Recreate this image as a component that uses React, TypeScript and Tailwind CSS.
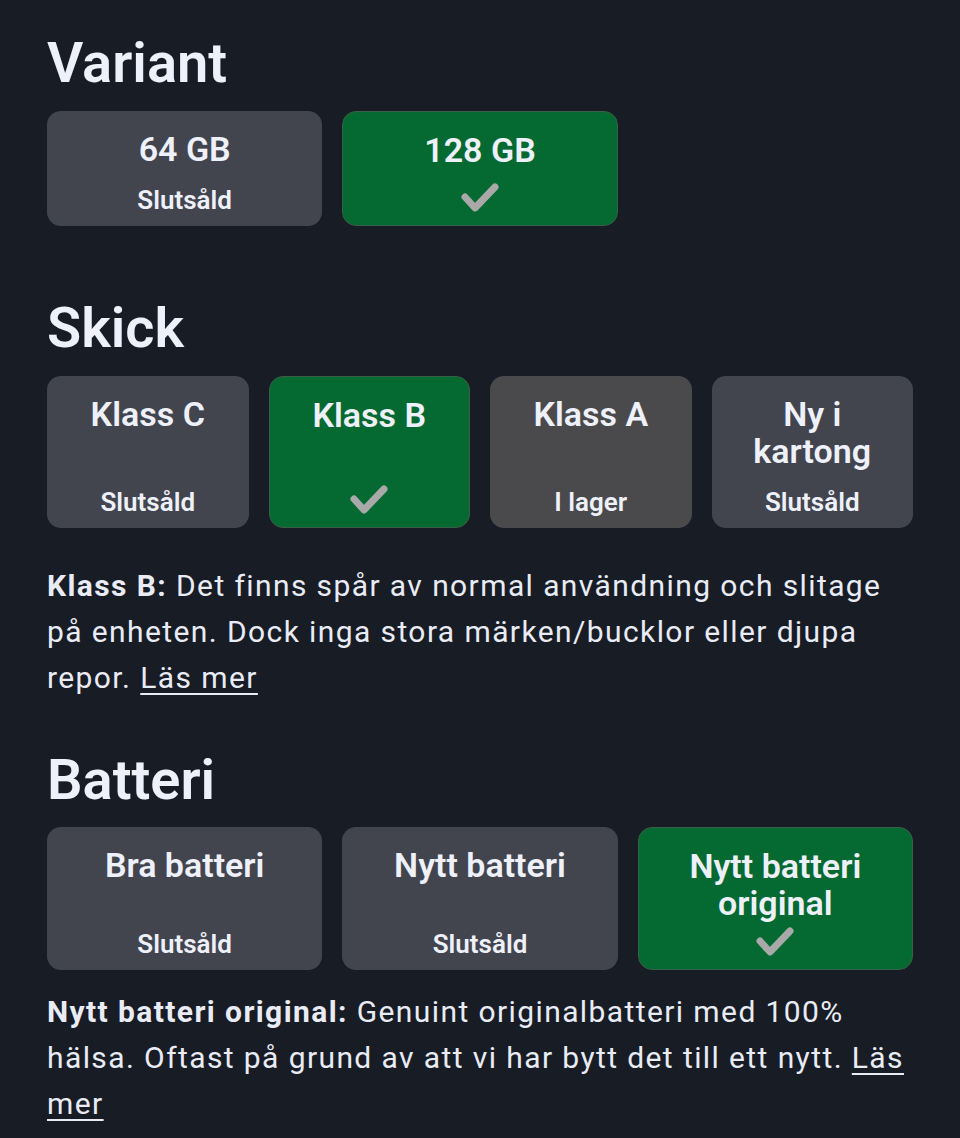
type Option = {
  title: string;
  sub?: string;
  selected?: boolean;
  tone?: "gray" | "stone";
};

const VARIANTS: Option[] = [
  { title: "64 GB", sub: "Slutsåld" },
  { title: "128 GB", selected: true },
];

const CONDITIONS: Option[] = [
  { title: "Klass C", sub: "Slutsåld" },
  { title: "Klass B", selected: true },
  { title: "Klass A", sub: "I lager", tone: "stone" },
  { title: "Ny i kartong", sub: "Slutsåld" },
];

const BATTERIES: Option[] = [
  { title: "Bra batteri", sub: "Slutsåld" },
  { title: "Nytt batteri", sub: "Slutsåld" },
  { title: "Nytt batteri original", selected: true },
];

function Check() {
  return (
    <svg width="40" height="30" viewBox="0 0 40 30" fill="none" className="mb-[2px]">
      <polyline
        points="5,14 15,25 35,4"
        stroke="#a9a9a9"
        strokeWidth="7"
        strokeLinecap="round"
        strokeLinejoin="round"
      />
    </svg>
  );
}

function OptionCard({ opt, height }: { opt: Option; height: string }) {
  const bg = opt.selected
    ? "bg-[#056a31] border border-[#3a5f48]"
    : opt.tone === "stone"
      ? "bg-[#4a4a4c]"
      : "bg-[#42454e]";
  return (
    <div
      className={`${bg} ${height} rounded-[14px] flex flex-col items-center justify-between px-3 pt-5 pb-[11px] text-center`}
    >
      <div className="text-[34px] leading-[37px] font-semibold text-[#eef1fb]">
        {opt.title}
      </div>
      <div className="h-[30px] flex items-center justify-center">
        {opt.selected ? (
          <Check />
        ) : (
          <span className="text-[26px] leading-[30px] font-semibold text-[#eef1fb]">
            {opt.sub}
          </span>
        )}
      </div>
    </div>
  );
}

function Heading({ children }: { children: string }) {
  return (
    <h2 className="text-[56px] leading-[64px] font-semibold text-[#eef1fc]">
      {children}
    </h2>
  );
}

export default function App() {
  return (
    <div
      className="min-h-[1138px] bg-[#181c25] px-[47px] pt-[31px] pb-3 text-[#eef1fb]"
      style={{ fontFamily: "Roboto, 'Noto Sans', sans-serif" }}
    >
      <Heading>Variant</Heading>
      <div className="grid grid-cols-3 gap-5 mt-4">
        {VARIANTS.map((o) => (
          <OptionCard key={o.title} opt={o} height="min-h-[115px]" />
        ))}
      </div>

      <div className="mt-[70px]">
        <Heading>Skick</Heading>
      </div>
      <div className="grid grid-cols-4 gap-5 mt-4">
        {CONDITIONS.map((o) => (
          <OptionCard key={o.title} opt={o} height="min-h-[152px]" />
        ))}
      </div>
      <p className="mt-[35px] text-[30px] leading-[46px] tracking-[1.4px] text-[#e9ecf6]">
        <span className="font-bold">Klass B:</span> Det finns spår av normal
        användning och slitage på enheten. Dock inga stora märken/bucklor eller
        djupa repor.{" "}
        <a href="#" className="underline decoration-2 underline-offset-[5px]">
          Läs mer
        </a>
      </p>

      <div className="mt-[47px]">
        <Heading>Batteri</Heading>
      </div>
      <div className="grid grid-cols-3 gap-5 mt-[15px]">
        {BATTERIES.map((o) => (
          <OptionCard key={o.title} opt={o} height="min-h-[143px]" />
        ))}
      </div>
      <p className="mt-[19px] text-[30px] leading-[46px] tracking-[1.4px] text-[#e9ecf6]">
        <span className="font-bold">Nytt batteri original:</span> Genuint
        originalbatteri med 100% hälsa. Oftast på grund av att vi har bytt det
        till ett nytt.{" "}
        <a href="#" className="underline decoration-2 underline-offset-[5px]">
          Läs mer
        </a>
      </p>
    </div>
  );
}
